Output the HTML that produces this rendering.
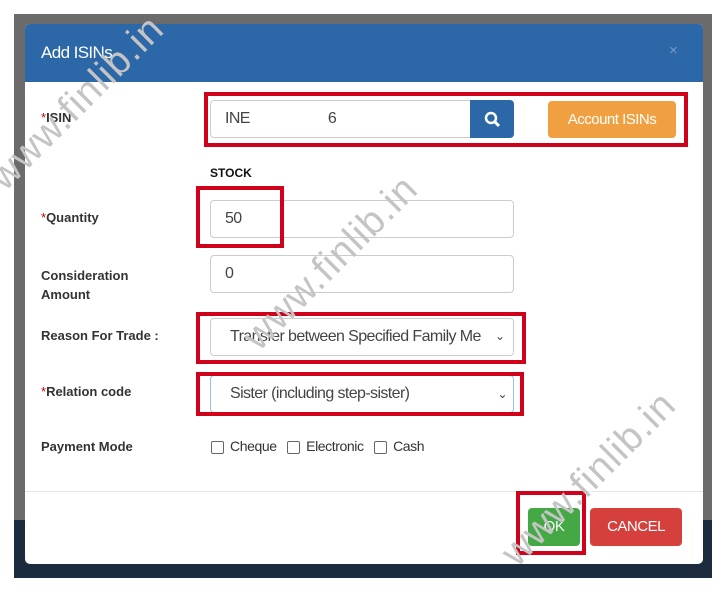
<!DOCTYPE html>
<html><head><style>
*{box-sizing:border-box;margin:0;padding:0}
body{width:726px;height:592px;background:#fff;position:relative;overflow:hidden;font-family:"Liberation Sans",sans-serif}
.a{position:absolute}
.lbl{position:absolute;left:41px;font-size:13px;font-weight:bold;color:#333}
.lbl i{color:#c00;font-style:normal;font-weight:normal}
.inp{position:absolute;background:#fff;border:1px solid #ccc;border-radius:4px;font-size:16px;color:#444;padding-left:14px;display:flex;align-items:center;letter-spacing:-0.6px;white-space:nowrap;overflow:hidden}
.red{position:absolute;border:4px solid #d0021b}
.cb{display:inline-block;width:13px;height:13px;border:1.5px solid #666;border-radius:2px;vertical-align:middle;margin-right:6px}
.wm{position:absolute;color:#c4c4c4;font-size:39px;line-height:39px;transform:rotate(-45deg);transform-origin:left bottom;white-space:nowrap;letter-spacing:1px}
</style></head><body>
<div class="a" style="left:14px;top:14px;width:698px;height:564px;background:#6b6b6b"></div>
<div class="a" style="left:14px;top:520px;width:698px;height:58px;background:#1d2b3f"></div>
<div class="a" style="left:25px;top:24px;width:678px;height:540px;background:#fff;border-radius:5px;overflow:hidden">
 <div class="a" style="left:0;top:0;width:678px;height:58px;background:#2c67a8"></div>
 <div class="a" style="left:16px;top:19px;color:#fff;font-size:17px;letter-spacing:-0.6px">Add ISINs</div>
 <div class="a" style="left:644px;top:18px;color:#7a9cc6;font-size:15px">×</div>
 <div class="a" style="left:0;top:467px;width:678px;height:1px;background:#e5e5e5"></div>
</div>
<div class="lbl" style="top:110px"><i>*</i>ISIN</div>
<div class="inp" style="left:210px;top:100px;width:262px;height:38px;border-radius:4px 0 0 4px">INE<span style="margin-left:78px">6</span></div>
<div class="a" style="left:470px;top:100px;width:44px;height:38px;background:#2c67a8;border-radius:0 4px 4px 0">
<svg width="44" height="38"><circle cx="21" cy="18" r="5" stroke="#fff" stroke-width="2.5" fill="none"/><path d="M25 22l4 4" stroke="#fff" stroke-width="3"/></svg></div>
<div class="a" style="left:548px;top:101px;width:128px;height:37px;background:#f0a040;border-radius:4px;color:#fff;font-size:15px;text-align:center;line-height:37px;letter-spacing:-0.5px">Account ISINs</div>
<div class="red" style="left:204px;top:92px;width:484px;height:55px"></div>
<div class="a" style="left:210px;top:166px;font-size:12px;font-weight:bold;color:#111">STOCK</div>
<div class="lbl" style="top:210px"><i>*</i>Quantity</div>
<div class="inp" style="left:210px;top:200px;width:304px;height:38px">50</div>
<div class="red" style="left:196px;top:186px;width:88px;height:62px"></div>
<div class="lbl" style="top:266px;line-height:19px">Consideration<br>Amount</div>
<div class="inp" style="left:210px;top:255px;width:304px;height:38px">0</div>
<div class="lbl" style="top:328px">Reason For Trade :</div>
<div class="inp" style="left:210px;top:318px;width:304px;height:38px;padding-left:19px">Transfer between Specified Family Me<span style="position:absolute;right:0;width:18px;height:36px;background:#fff;font-size:12px;line-height:34px">⌄</span></div>
<div class="red" style="left:196px;top:312px;width:330px;height:52px"></div>
<div class="lbl" style="top:384px"><i>*</i>Relation code</div>
<div class="inp" style="left:210px;top:375px;width:304px;height:38px;padding-left:19px;border-color:#9cc0e6">Sister (including step-sister)<span style="position:absolute;right:6px;font-size:12px">⌄</span></div>
<div class="red" style="left:196px;top:372px;width:328px;height:44px"></div>
<div class="lbl" style="top:439px">Payment Mode</div>
<div class="a" style="left:211px;top:438px;font-size:14px;color:#333;letter-spacing:-0.4px"><span class="cb"></span>Cheque&nbsp;&nbsp;&nbsp;<span class="cb"></span>Electronic&nbsp;&nbsp;&nbsp;<span class="cb"></span>Cash</div>
<div class="a" style="left:528px;top:508px;width:52px;height:38px;background:#44a845;border-radius:4px;color:#fff;font-size:15px;text-align:center;line-height:38px;letter-spacing:-0.5px">OK</div>
<div class="a" style="left:590px;top:508px;width:92px;height:38px;background:#d6403c;border-radius:4px;color:#fff;font-size:15px;text-align:center;line-height:38px;letter-spacing:-0.5px">CANCEL</div>
<div class="red" style="left:516px;top:491px;width:70px;height:64px"></div>
<div class="wm" style="left:10px;top:158px">www.finlib.in</div>
<div class="wm" style="left:264px;top:318px">www.finlib.in</div>
<div class="wm" style="left:522px;top:534px">www.finlib.in</div>
</body></html>
